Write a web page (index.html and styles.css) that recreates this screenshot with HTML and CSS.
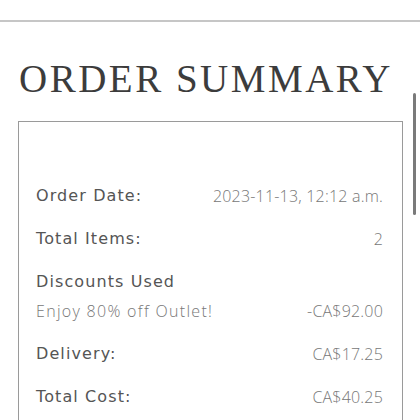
FILE: index.html
```html
<!DOCTYPE html>
<html>
<head>
<meta charset="utf-8">
<link rel="stylesheet" href="styles.css">
</head>
<body>
<div class="topbar"></div>
<main class="page">
  <h1 class="title">ORDER SUMMARY</h1>
  <section class="box">
    <div class="row"><span class="label">Order Date:</span><span class="value">2023-11-13, 12:12 a.m.</span></div>
    <div class="row"><span class="label">Total Items:</span><span class="value">2</span></div>
    <div class="group">
      <div class="row"><span class="label">Discounts Used</span></div>
      <div class="row"><span class="value promo">Enjoy 80% off Outlet!</span><span class="value">-CA$92.00</span></div>
    </div>
    <div class="row"><span class="label">Delivery:</span><span class="value">CA$17.25</span></div>
    <div class="row"><span class="label">Total Cost:</span><span class="value">CA$40.25</span></div>
  </section>
</main>
<div class="scrollbar"></div>
</body>
</html>
```
FILE: styles.css
```css
html, body {
  margin: 0;
  padding: 0;
  background: #fff;
}
body {
  width: 420px;
  height: 420px;
  overflow: hidden;
  position: relative;
}
.topbar {
  height: 20px;
  border-bottom: 2px solid #c6c6c6;
}
.page {
  padding: 0 18px;
}
.title {
  margin: 0;
  padding-top: 35px;
  padding-left: 1px;
  font-family: "Liberation Serif", "DejaVu Serif", serif;
  font-weight: normal;
  font-size: 39px;
  line-height: 44px;
  letter-spacing: 2.5px;
  color: #3c3c3c;
}
.box {
  margin-top: 20px;
  width: 385px;
  border: 1px solid #9a9a9a;
  box-sizing: border-box;
  padding: 64px 19px 40px 17px;
  display: flex;
  flex-direction: column;
  gap: 23px;
  font-size: 16px;
  line-height: 20px;
}
.group {
  display: flex;
  flex-direction: column;
  gap: 9px;
}
.row {
  display: flex;
  justify-content: space-between;
  align-items: center;
}
.label {
  font-family: "DejaVu Sans", "Open Sans", sans-serif;
  color: #555;
  letter-spacing: 1.1px;
}
.value {
  font-family: "Open Sans", "Liberation Sans", sans-serif;
  color: #777;
  font-weight: 300;
  letter-spacing: 0.2px;
}
.promo {
  letter-spacing: 1.3px;
}
.scrollbar {
  position: absolute;
  left: 413px;
  top: 93px;
  width: 3px;
  height: 122px;
  border-radius: 2px;
  background: #7a7a7a;
}
```
